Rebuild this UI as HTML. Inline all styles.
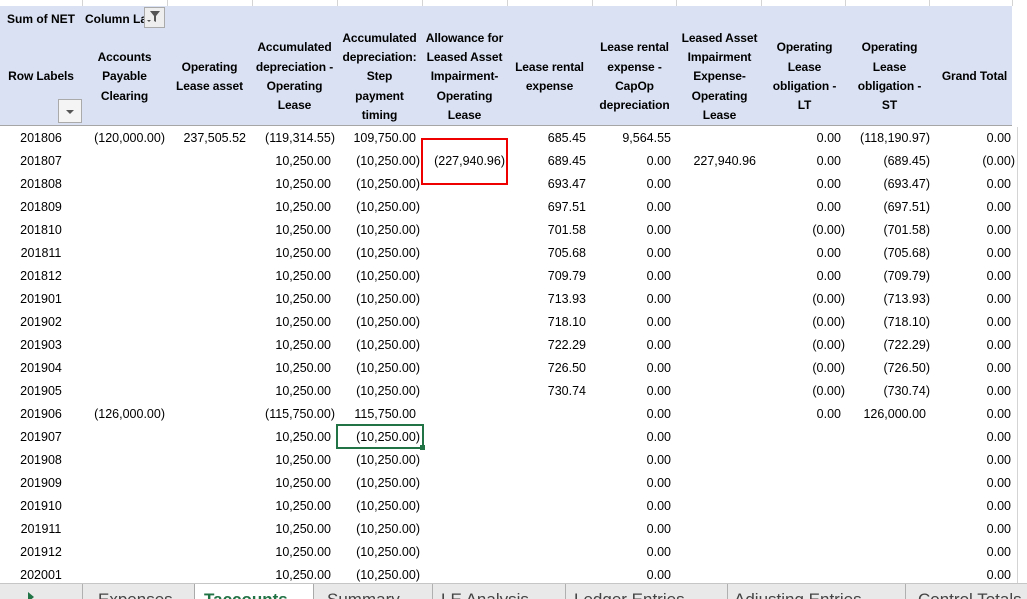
<!DOCTYPE html>
<html><head><meta charset="utf-8"><style>
body{margin:0;width:1027px;height:598px;overflow:hidden;background:#fff;font-family:"Liberation Sans",Arial,sans-serif;font-size:12.5px;color:#000;position:relative}
.hdr{position:absolute;left:0;top:6px;width:1012px;height:119px;background:#d9e1f2;border-bottom:1px solid #a6a6a6}
.g{position:absolute;top:0;height:6px;width:1px;background:#d4d4d4}
.h{position:absolute;font-weight:bold;font-size:12px;text-align:center;line-height:19.3px;display:flex;align-items:center;justify-content:center;top:27px;height:100px;width:85px;letter-spacing:-0.1px}
.r{position:absolute;left:0;height:23px;line-height:23px;width:1017px}
.r span{position:absolute;top:0;text-align:right;white-space:nowrap}
.r span.l{left:0;width:82px;text-align:center}
.p{padding-right:6px}.n{padding-right:2px}
.tabs{position:absolute;left:0;top:583px;width:1027px;height:15px;background:#e9e9e9;border-top:1px solid #c6c6c6;overflow:hidden}
.t{position:absolute;top:6px;font-size:17px;color:#444;white-space:nowrap}
.d{position:absolute;top:0;width:1px;height:15px;background:#b0b0b0}
</style></head><body>
<div class="g" style="left:82px"></div><div class="g" style="left:167px"></div><div class="g" style="left:252px"></div><div class="g" style="left:337px"></div><div class="g" style="left:422px"></div><div class="g" style="left:507px"></div><div class="g" style="left:592px"></div><div class="g" style="left:676px"></div><div class="g" style="left:761px"></div><div class="g" style="left:845px"></div><div class="g" style="left:929px"></div><div class="g" style="left:1012px"></div>
<div class="hdr"></div>
<div style="position:absolute;left:7px;top:12px;font-weight:bold;font-size:12px">Sum of NET</div>
<div style="position:absolute;left:85px;top:12px;font-weight:bold;font-size:12px;width:60px;overflow:hidden;white-space:nowrap">Column Labels</div>
<div style="position:absolute;left:144px;top:7px;width:21px;height:21px;background:#eee;border:1px solid #aaa;box-sizing:border-box">
<svg width="19" height="19" viewBox="0 0 19 19"><path d="M5 3h10l-4 5v6l-2 -1v-5z" fill="#555"/><path d="M2 12h4l-2 2z" fill="#555"/></svg></div>
<div style="position:absolute;left:58px;top:99px;width:24px;height:24px;background:#f4f4f4;border:1px solid #aaa;box-sizing:border-box">
<svg width="22" height="22" viewBox="0 0 22 22"><path d="M7 10h8l-4 4z" fill="#555"/></svg></div>
<div class="h" style="left:0;width:82px">Row Labels</div>
<div class="h" style="left:82px">Accounts<br>Payable<br>Clearing</div>
<div class="h" style="left:167px">Operating<br>Lease asset</div>
<div class="h" style="left:252px">Accumulated<br>depreciation -<br>Operating<br>Lease</div>
<div class="h" style="left:337px">Accumulated<br>depreciation:<br>Step<br>payment<br>timing</div>
<div class="h" style="left:422px">Allowance for<br>Leased Asset<br>Impairment-<br>Operating<br>Lease</div>
<div class="h" style="left:507px">Lease rental<br>expense</div>
<div class="h" style="left:592px">Lease rental<br>expense -<br>CapOp<br>depreciation</div>
<div class="h" style="left:677px">Leased Asset<br>Impairment<br>Expense-<br>Operating<br>Lease</div>
<div class="h" style="left:762px">Operating<br>Lease<br>obligation -<br>LT</div>
<div class="h" style="left:847px">Operating<br>Lease<br>obligation -<br>ST</div>
<div class="h" style="left:932px">Grand Total</div>

<div class="r" style="top:127px"><span class="l">201806</span><span class="n" style="right:850px">(120,000.00)</span><span class="p" style="right:765px">237,505.52</span><span class="n" style="right:680px">(119,314.55)</span><span class="p" style="right:595px">109,750.00</span><span class="p" style="right:425px">685.45</span><span class="p" style="right:340px">9,564.55</span><span class="p" style="right:170px">0.00</span><span class="n" style="right:85px">(118,190.97)</span><span class="p" style="right:0px">0.00</span></div>
<div class="r" style="top:150px"><span class="l">201807</span><span class="p" style="right:680px">10,250.00</span><span class="n" style="right:595px">(10,250.00)</span><span class="n" style="right:510px">(227,940.96)</span><span class="p" style="right:425px">689.45</span><span class="p" style="right:340px">0.00</span><span class="p" style="right:255px">227,940.96</span><span class="p" style="right:170px">0.00</span><span class="n" style="right:85px">(689.45)</span><span class="n" style="right:0px">(0.00)</span></div>
<div class="r" style="top:173px"><span class="l">201808</span><span class="p" style="right:680px">10,250.00</span><span class="n" style="right:595px">(10,250.00)</span><span class="p" style="right:425px">693.47</span><span class="p" style="right:340px">0.00</span><span class="p" style="right:170px">0.00</span><span class="n" style="right:85px">(693.47)</span><span class="p" style="right:0px">0.00</span></div>
<div class="r" style="top:196px"><span class="l">201809</span><span class="p" style="right:680px">10,250.00</span><span class="n" style="right:595px">(10,250.00)</span><span class="p" style="right:425px">697.51</span><span class="p" style="right:340px">0.00</span><span class="p" style="right:170px">0.00</span><span class="n" style="right:85px">(697.51)</span><span class="p" style="right:0px">0.00</span></div>
<div class="r" style="top:219px"><span class="l">201810</span><span class="p" style="right:680px">10,250.00</span><span class="n" style="right:595px">(10,250.00)</span><span class="p" style="right:425px">701.58</span><span class="p" style="right:340px">0.00</span><span class="n" style="right:170px">(0.00)</span><span class="n" style="right:85px">(701.58)</span><span class="p" style="right:0px">0.00</span></div>
<div class="r" style="top:242px"><span class="l">201811</span><span class="p" style="right:680px">10,250.00</span><span class="n" style="right:595px">(10,250.00)</span><span class="p" style="right:425px">705.68</span><span class="p" style="right:340px">0.00</span><span class="p" style="right:170px">0.00</span><span class="n" style="right:85px">(705.68)</span><span class="p" style="right:0px">0.00</span></div>
<div class="r" style="top:265px"><span class="l">201812</span><span class="p" style="right:680px">10,250.00</span><span class="n" style="right:595px">(10,250.00)</span><span class="p" style="right:425px">709.79</span><span class="p" style="right:340px">0.00</span><span class="p" style="right:170px">0.00</span><span class="n" style="right:85px">(709.79)</span><span class="p" style="right:0px">0.00</span></div>
<div class="r" style="top:288px"><span class="l">201901</span><span class="p" style="right:680px">10,250.00</span><span class="n" style="right:595px">(10,250.00)</span><span class="p" style="right:425px">713.93</span><span class="p" style="right:340px">0.00</span><span class="n" style="right:170px">(0.00)</span><span class="n" style="right:85px">(713.93)</span><span class="p" style="right:0px">0.00</span></div>
<div class="r" style="top:311px"><span class="l">201902</span><span class="p" style="right:680px">10,250.00</span><span class="n" style="right:595px">(10,250.00)</span><span class="p" style="right:425px">718.10</span><span class="p" style="right:340px">0.00</span><span class="n" style="right:170px">(0.00)</span><span class="n" style="right:85px">(718.10)</span><span class="p" style="right:0px">0.00</span></div>
<div class="r" style="top:334px"><span class="l">201903</span><span class="p" style="right:680px">10,250.00</span><span class="n" style="right:595px">(10,250.00)</span><span class="p" style="right:425px">722.29</span><span class="p" style="right:340px">0.00</span><span class="n" style="right:170px">(0.00)</span><span class="n" style="right:85px">(722.29)</span><span class="p" style="right:0px">0.00</span></div>
<div class="r" style="top:357px"><span class="l">201904</span><span class="p" style="right:680px">10,250.00</span><span class="n" style="right:595px">(10,250.00)</span><span class="p" style="right:425px">726.50</span><span class="p" style="right:340px">0.00</span><span class="n" style="right:170px">(0.00)</span><span class="n" style="right:85px">(726.50)</span><span class="p" style="right:0px">0.00</span></div>
<div class="r" style="top:380px"><span class="l">201905</span><span class="p" style="right:680px">10,250.00</span><span class="n" style="right:595px">(10,250.00)</span><span class="p" style="right:425px">730.74</span><span class="p" style="right:340px">0.00</span><span class="n" style="right:170px">(0.00)</span><span class="n" style="right:85px">(730.74)</span><span class="p" style="right:0px">0.00</span></div>
<div class="r" style="top:403px"><span class="l">201906</span><span class="n" style="right:850px">(126,000.00)</span><span class="n" style="right:680px">(115,750.00)</span><span class="p" style="right:595px">115,750.00</span><span class="p" style="right:340px">0.00</span><span class="p" style="right:170px">0.00</span><span class="p" style="right:85px">126,000.00</span><span class="p" style="right:0px">0.00</span></div>
<div class="r" style="top:426px"><span class="l">201907</span><span class="p" style="right:680px">10,250.00</span><span class="n" style="right:595px">(10,250.00)</span><span class="p" style="right:340px">0.00</span><span class="p" style="right:0px">0.00</span></div>
<div class="r" style="top:449px"><span class="l">201908</span><span class="p" style="right:680px">10,250.00</span><span class="n" style="right:595px">(10,250.00)</span><span class="p" style="right:340px">0.00</span><span class="p" style="right:0px">0.00</span></div>
<div class="r" style="top:472px"><span class="l">201909</span><span class="p" style="right:680px">10,250.00</span><span class="n" style="right:595px">(10,250.00)</span><span class="p" style="right:340px">0.00</span><span class="p" style="right:0px">0.00</span></div>
<div class="r" style="top:495px"><span class="l">201910</span><span class="p" style="right:680px">10,250.00</span><span class="n" style="right:595px">(10,250.00)</span><span class="p" style="right:340px">0.00</span><span class="p" style="right:0px">0.00</span></div>
<div class="r" style="top:518px"><span class="l">201911</span><span class="p" style="right:680px">10,250.00</span><span class="n" style="right:595px">(10,250.00)</span><span class="p" style="right:340px">0.00</span><span class="p" style="right:0px">0.00</span></div>
<div class="r" style="top:541px"><span class="l">201912</span><span class="p" style="right:680px">10,250.00</span><span class="n" style="right:595px">(10,250.00)</span><span class="p" style="right:340px">0.00</span><span class="p" style="right:0px">0.00</span></div>
<div class="r" style="top:564px"><span class="l">202001</span><span class="p" style="right:680px">10,250.00</span><span class="n" style="right:595px">(10,250.00)</span><span class="p" style="right:340px">0.00</span><span class="p" style="right:0px">0.00</span></div>

<div style="position:absolute;left:1017px;top:127px;width:1px;height:456px;background:#d4d4d4"></div>
<div style="position:absolute;left:421px;top:138px;width:87px;height:47px;border:2px solid #e00;box-sizing:border-box"></div>
<div style="position:absolute;left:336px;top:424px;width:88px;height:25px;border:2px solid #217346;box-sizing:border-box"></div>
<div style="position:absolute;left:420px;top:445px;width:5px;height:5px;background:#217346"></div>

<div class="tabs">
<div style="position:absolute;left:28px;top:8px;width:0;height:0;border-left:6px solid #217346;border-top:5px solid transparent;border-bottom:5px solid transparent"></div>
<div class="d" style="left:82px"></div>
<div class="t" style="left:98px">Expenses</div>
<div style="position:absolute;left:194px;top:-1px;width:118px;height:16px;background:#fff;border-left:1px solid #aaa;border-right:1px solid #aaa"></div>
<div class="t" style="left:204px;color:#217346;font-weight:bold">Taccounts</div>
<div class="t" style="left:327px">Summary</div>
<div class="d" style="left:432px"></div>
<div class="t" style="left:441px">LE Analysis</div>
<div class="d" style="left:565px"></div>
<div class="t" style="left:574px">Ledger Entries</div>
<div class="d" style="left:727px"></div>
<div class="t" style="left:734px">Adjusting Entries</div>
<div class="d" style="left:905px"></div>
<div class="t" style="left:918px">Control Totals</div>
</div>
</body></html>
